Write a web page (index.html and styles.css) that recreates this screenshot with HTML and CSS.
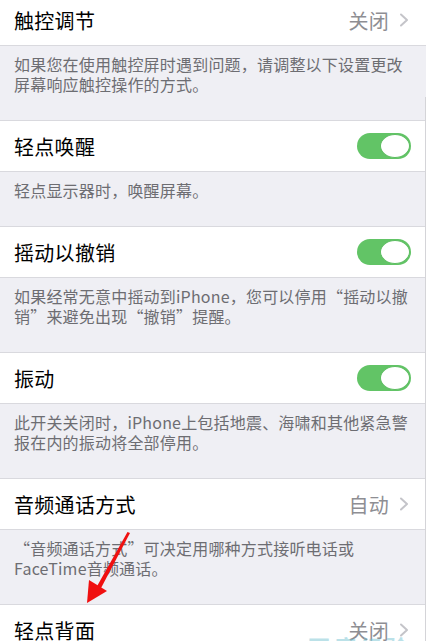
FILE: index.html
```html
<!DOCTYPE html>
<html lang="zh-CN">
<head>
<meta charset="utf-8">
<title>触控</title>
<link rel="stylesheet" href="styles.css">
</head>
<body>
<div class="page">
  <div class="cell first">
    <span class="label">触控调节</span>
    <span class="value">关闭<svg class="chev" width="10" height="14" viewBox="0 0 10 14"><polyline points="2,1.5 8,7 2,12.5" fill="none" stroke="#c4c4c9" stroke-width="2" stroke-linecap="round" stroke-linejoin="round"/></svg></span>
  </div>
  <div class="desc">如果您在使用触控屏时遇到问题，请调整以下设置更改屏幕响应触控操作的方式。</div>

  <div class="cell">
    <span class="label">轻点唤醒</span>
    <span class="toggle"><span class="knob"></span></span>
  </div>
  <div class="desc">轻点显示器时，唤醒屏幕。</div>

  <div class="cell">
    <span class="label">摇动以撤销</span>
    <span class="toggle"><span class="knob"></span></span>
  </div>
  <div class="desc">如果经常无意中摇动到iPhone，您可以停用“摇动以撤销”来避免出现“撤销”提醒。</div>

  <div class="cell">
    <span class="label">振动</span>
    <span class="toggle"><span class="knob"></span></span>
  </div>
  <div class="desc">此开关关闭时，iPhone上包括地震、海啸和其他紧急警报在内的振动将全部停用。</div>

  <div class="cell">
    <span class="label">音频通话方式</span>
    <span class="value">自动<svg class="chev" width="10" height="14" viewBox="0 0 10 14"><polyline points="2,1.5 8,7 2,12.5" fill="none" stroke="#c4c4c9" stroke-width="2" stroke-linecap="round" stroke-linejoin="round"/></svg></span>
  </div>
  <div class="desc">“音频通话方式”可决定用哪种方式接听电话或FaceTime音频通话。</div>

  <div class="cell">
    <span class="label">轻点背面</span>
    <span class="value">关闭<svg class="chev" width="10" height="14" viewBox="0 0 10 14"><polyline points="2,1.5 8,7 2,12.5" fill="none" stroke="#c4c4c9" stroke-width="2" stroke-linecap="round" stroke-linejoin="round"/></svg></span>
  </div>
  <div class="desc"></div>

  <div class="edge-line"></div>
  <svg class="arrow" width="426" height="641" viewBox="0 0 426 641">
    <polygon points="130,533 127.5,532 96,588 100,590" fill="#f01010"/>
    <polygon points="87,603 89,580 107,591" fill="#f01010"/>
  </svg>
  <div class="watermark">百度经验</div>
</div>
</body>
</html>
```
FILE: styles.css
```css
html, body {
  margin: 0;
  padding: 0;
  background: #efeff4;
}
body {
  font-family: "Noto Sans CJK SC", "Noto Sans", sans-serif;
  width: 426px;
  height: 641px;
  overflow: hidden;
}
.page {
  position: relative;
  width: 426px;
  height: 641px;
  overflow: hidden;
}
.cell {
  box-sizing: border-box;
  height: 52px;
  background: #ffffff;
  border-top: 1px solid #d9d9de;
  border-bottom: 1px solid #d9d9de;
  display: flex;
  align-items: center;
  justify-content: space-between;
  padding: 0 15px 0 14px;
}
.cell.first {
  margin-top: -6px;
}
.label {
  font-size: 20px;
  color: #000;
  letter-spacing: 0.3px;
}
.value {
  display: flex;
  align-items: center;
  gap: 10px;
  font-size: 20px;
  color: #8e8e93;
  letter-spacing: 0.3px;
  padding-right: 2px;
}
.chev {
  display: block;
}
.toggle {
  box-sizing: border-box;
  width: 54px;
  height: 26px;
  border-radius: 13px;
  background: #62c466;
  display: flex;
  justify-content: flex-end;
  align-items: center;
  padding: 0 1px;
}
.knob {
  box-sizing: border-box;
  width: 30px;
  height: 24px;
  border-radius: 50%;
  background: #fff;
  border: 1px solid #5cbd60;
}
.desc {
  box-sizing: border-box;
  min-height: 54px;
  padding: 8px 18px 26px 14px;
  font-size: 16px;
  line-height: 20px;
  color: #6d6d72;
  letter-spacing: 0.2px;
}
.edge-line {
  position: absolute;
  right: 0;
  top: 97px;
  bottom: 0;
  width: 1px;
  background: #d4d4d8;
}
.arrow {
  position: absolute;
  left: 0;
  top: 0;
}
.watermark {
  position: absolute;
  right: 14px;
  bottom: -21px;
  font-size: 22px;
  font-weight: bold;
  letter-spacing: 4px;
  color: rgba(120, 195, 210, 0.5);
}
```
